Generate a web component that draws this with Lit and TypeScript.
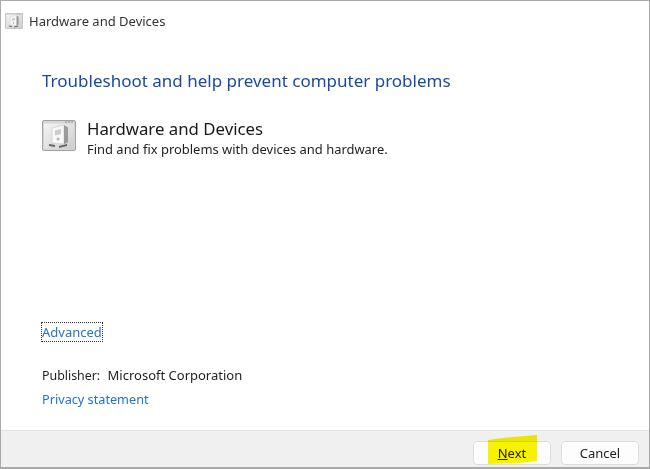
import { LitElement, html, css, svg } from 'lit';
import { customElement } from 'lit/decorators.js';

// same glyph for the title bar and the task row, ids differ so the gradients don't clash
const deviceIcon = (id: string, width: number, height: number) => html`
  <svg width=${width} height=${height} viewBox="0 0 34 31">
    ${svg`
      <defs>
        <linearGradient id=${id} x1="0" y1="0" x2="1" y2="1">
          <stop offset="0" stop-color="#f4f4f4"/>
          <stop offset="1" stop-color="#cdcdcd"/>
        </linearGradient>
      </defs>
      <rect x="0.5" y="0.5" width="33" height="30" rx="1.5" fill="#d6d6d6" stroke="#a2a2a2"/>
      <rect x="2" y="3.5" width="30" height="25.5" fill="url(#${id})"/>
      <path d="M23 2h8" stroke="#7f93ad" stroke-width="1.2" stroke-dasharray="2 1"/>
      <path d="M10 8l12-3v19l-12-1z" fill="#f8f8f8" stroke="#c8c8c8" stroke-width="0.6"/>
      <path d="M22 5l4 2.5v15l-4 1.5z" fill="#9a9a9a"/>
      <path d="M13 10.500l6-1.500v5l-6 1.500z" fill="#cccccc"/>
      <path d="M16 17.500a1.500 1.500 0 1 0 .1 0z" fill="#b4b4b4"/>
      <path d="M7 24l6 1v2l-6-1zM17 26l8-2v2l-8 2z" fill="#666"/>
    `}
  </svg>
`;

@customElement('app-root')
export class AppRoot extends LitElement {
  static styles = css`
    :host {
      display: block;
      width: 650px;
      height: 469px;
      font-family: "Noto Sans", "Open Sans", sans-serif;
      color: #1f1f1f;
    }

    .window {
      box-sizing: border-box;
      height: 469px;
      display: flex;
      flex-direction: column;
      background: #fff;
      border-top: 1px solid #a9a9a9;
      border-left: 1px solid #a9a9a9;
      border-right: 1px solid #a9a9a9;
      border-bottom: 2px solid #a9a9a9;
    }

    .titlebar {
      display: flex;
      align-items: center;
      gap: 6px;
      height: 40px;
      padding-left: 4px;
      font-size: 13px;
      color: #333;
    }

    .content {
      flex: 1;
      display: flex;
      flex-direction: column;
      padding: 0 40px 0 41px;
    }

    h1 {
      margin: 0;
      padding-top: 28px;
      font-size: 17px;
      line-height: 24px;
      font-weight: 400;
      color: #1a4a9c;
    }

    .task {
      display: flex;
      gap: 11px;
      margin-top: 24px;
    }

    .task-icon {
      padding-top: 3px;
    }

    .task-title {
      font-size: 16.8px;
      line-height: 23px;
      color: #1a1a1a;
    }

    .task-desc {
      font-size: 12.95px;
      line-height: 18px;
    }

    .spacer {
      flex: 1;
    }

    a {
      color: #2672c8;
      text-decoration: none;
    }

    .advanced {
      align-self: flex-start;
      font-size: 13px;
      line-height: 18px;
      outline: 1px dotted #333;
    }

    .publisher {
      margin-top: 25px;
      font-size: 13px;
      line-height: 18px;
    }

    .publisher span {
      font-size: 12.4px;
      margin-right: 4px;
    }

    .privacy {
      font-size: 12.7px;
      margin: 5px 0 22px;
      line-height: 18px;
    }

    .footer {
      position: relative;
      display: flex;
      justify-content: flex-end;
      gap: 10px;
      height: 37px;
      padding: 10px 10px 0 0;
      box-sizing: border-box;
      background: #f0f0f0;
      border-top: 1px solid #e2e2e2;
    }

    button {
      width: 78px;
      height: 24px;
      padding: 0;
      font: inherit;
      font-size: 13px;
      color: #1f1f1f;
      background: #fdfdfd;
      border: 1px solid #dcdcdc;
      border-radius: 4px;
    }

    u {
      text-decoration-thickness: 1px;
    }

    .highlight {
      position: absolute;
      left: 487px;
      top: 4px;
      width: 49px;
      height: 29px;
      background: #f8f400;
      clip-path: polygon(0 17%, 30% 10%, 100% 0, 100% 90%, 60% 97%, 0 100%);
      mix-blend-mode: multiply;
    }
  `;

  render() {
    return html`
      <div class="window">
        <div class="titlebar">
          ${deviceIcon('g-small', 18, 16)}
          <span>Hardware and Devices</span>
        </div>
        <div class="content">
          <h1>Troubleshoot and help prevent computer problems</h1>
          <div class="task">
            <div class="task-icon">${deviceIcon('g-large', 34, 31)}</div>
            <div>
              <div class="task-title">Hardware and Devices</div>
              <div class="task-desc">Find and fix problems with devices and hardware.</div>
            </div>
          </div>
          <div class="spacer"></div>
          <a class="advanced" href="#">Advanced</a>
          <div class="publisher"><span>Publisher:</span> Microsoft Corporation</div>
          <a class="privacy" href="#">Privacy statement</a>
        </div>
        <div class="footer">
          <button><u>N</u>ext</button>
          <button>Cancel</button>
          <div class="highlight"></div>
        </div>
      </div>
    `;
  }
}
